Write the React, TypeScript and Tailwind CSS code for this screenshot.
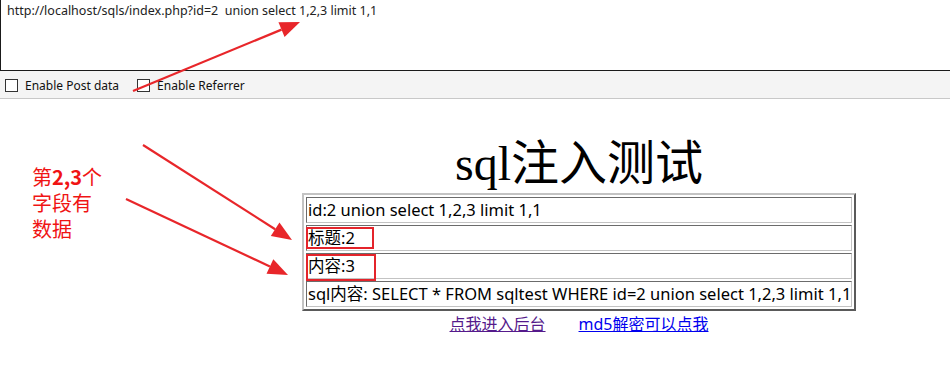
const ui = '"Noto Sans", "Noto Sans CJK SC", sans-serif';

const rows = [
  'id:2 union select 1,2,3 limit 1,1',
  '标题:2',
  '内容:3',
  'sql内容: SELECT * FROM sqltest WHERE id=2 union select 1,2,3 limit 1,1',
];

function Checkbox({ label }: { label: string }) {
  return (
    <label className="flex items-center gap-[7px]">
      <span className="w-[13px] h-[13px] border border-[#333] bg-white" />
      <span className="text-[12px] text-[#111]">{label}</span>
    </label>
  );
}

function Arrows() {
  const red = '#e8262a';
  const lines: [number, number, number, number][] = [
    [133, 91, 300, 22],
    [143, 145, 292, 240],
    [126, 199, 288, 275],
  ];
  return (
    <svg className="absolute inset-0 pointer-events-none" width={950} height={373}>
      {lines.map(([x1, y1, x2, y2], i) => {
        const a = Math.atan2(y2 - y1, x2 - x1);
        const len = 20;
        const half = 8;
        const bx = x2 - Math.cos(a) * len;
        const by = y2 - Math.sin(a) * len;
        const px = -Math.sin(a) * half;
        const py = Math.cos(a) * half;
        return (
          <g key={i}>
            <line x1={x1} y1={y1} x2={bx} y2={by} stroke={red} strokeWidth={2.2} />
            <polygon points={`${x2},${y2} ${bx + px},${by + py} ${bx - px},${by - py}`} fill={red} />
          </g>
        );
      })}
    </svg>
  );
}

export default function App() {
  return (
    <div className="relative w-[950px] h-[373px] overflow-hidden bg-white" style={{ fontFamily: ui }}>
      {/* url box */}
      <div className="h-[71px] border-l border-b border-[#1a1a1a] px-[6px] pt-[2px]">
        <div className="text-[12.5px] text-[#222] whitespace-pre">
          http://localhost/sqls/index.php?id=2  union select 1,2,3 limit 1,1
        </div>
      </div>

      {/* hackbar options */}
      <div className="h-[28px] bg-[#f4f4f4] border-b border-[#c8c8c8] flex items-center pl-[5px] pt-[2px] gap-[18px]">
        <Checkbox label="Enable Post data" />
        <Checkbox label="Enable Referrer" />
      </div>

      {/* page */}
      <div className="ml-[302px] w-[554px] pt-[41px]">
        <h1
          className="text-center text-[48px] leading-[48px] text-black"
          style={{ fontFamily: '"Liberation Serif", "Noto Sans CJK SC", serif' }}
        >
          sql注入测试
        </h1>
        <table className="mt-[5px] w-[554px] table-fixed border-2 border-separate border-spacing-[2px] border-t-[#c3c3c3] border-l-[#c3c3c3] border-r-[#5a5a5a] border-b-[#5a5a5a]">
          <tbody>
            {rows.map((r) => (
              <tr key={r}>
                <td className="h-[26px] p-0 pl-px border border-t-[#6b6b6b] border-l-[#6b6b6b] border-r-[#c3c3c3] border-b-[#c3c3c3] text-[16.5px] leading-[22px] text-black whitespace-nowrap overflow-hidden">
                  {r}
                </td>
              </tr>
            ))}
          </tbody>
        </table>
        <div className="mt-[2px] flex justify-center gap-[33px] text-[16px] leading-[22px]">
          <a className="underline text-[#551a8b]">点我进入后台</a>
          <a className="underline text-[#0000ee]">md5解密可以点我</a>
        </div>
      </div>

      {/* annotations */}
      <div className="absolute left-[306px] top-[227px] w-[68px] h-[22px] border-2 border-[#e4242b]" />
      <div className="absolute left-[306px] top-[254px] w-[70px] h-[27px] border-2 border-[#e4242b]" />
      <div
        className="absolute left-[32px] top-[164px] flex flex-col text-[20px] leading-[26px] text-[#f01414]"
        style={{ fontFamily: '"Noto Sans CJK SC", sans-serif' }}
      >
        <div className="h-[26px]">
          第<span className="font-bold">2,3</span>个
        </div>
        <div className="h-[26px]">字段有</div>
        <div className="h-[26px]">数据</div>
      </div>
      <Arrows />
    </div>
  );
}
